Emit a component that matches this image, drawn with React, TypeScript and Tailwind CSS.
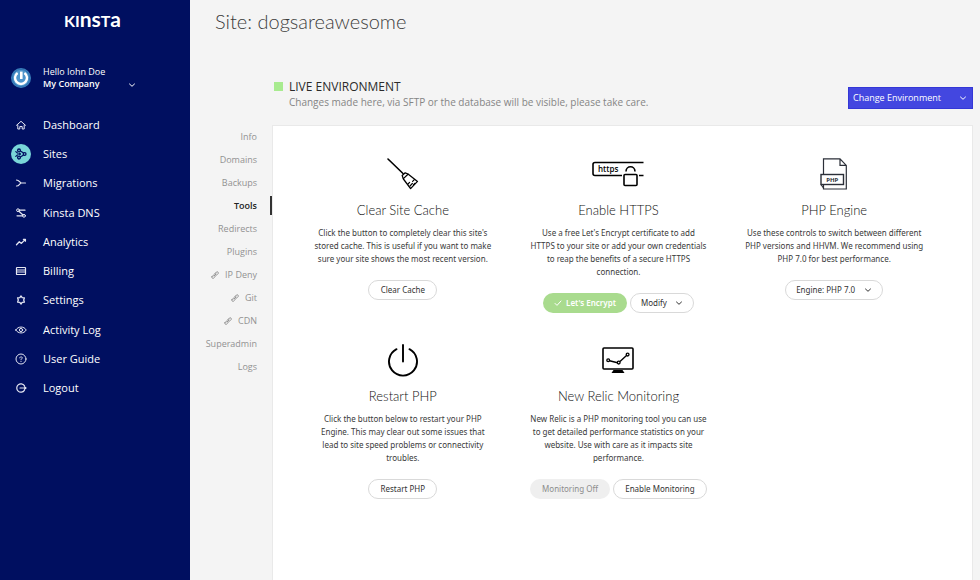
import type { ReactNode, SVGProps } from 'react'

type IconProps = SVGProps<SVGSVGElement>

function Svg({ size, children, ...rest }: IconProps & { size: number }) {
  return (
    <svg
      width={size}
      height={size}
      viewBox={`0 0 ${size} ${size}`}
      fill="none"
      stroke="currentColor"
      strokeLinecap="round"
      strokeLinejoin="round"
      aria-hidden="true"
      {...rest}
    >
      {children}
    </svg>
  )
}

const Chevron = ({ className }: { className?: string }) => (
  <Svg size={8} className={className}>
    <path d="M1.5 3 L4 5.3 L6.5 3" />
  </Svg>
)

const navItems: { label: string; icon: ReactNode; active?: boolean }[] = [
  {
    label: 'Dashboard',
    icon: <path d="M1.5 6.3 L6 2.3 L10.5 6.3 M2.8 6 V10 H4.8 V7.5 H7.2 V10 H9.2 V6" />,
  },
  {
    label: 'Sites',
    active: true,
    icon: (
      <>
        <circle cx="4" cy="2.4" r="1.4" strokeWidth="1.3" />
        <circle cx="4" cy="9.6" r="1.4" strokeWidth="1.3" />
        <circle cx="9.6" cy="6" r="1.4" strokeWidth="1.3" />
        <circle cx="4.6" cy="6" r="0.8" strokeWidth="1.1" />
        <path d="M0.8 3.6 L2.4 5 M0.8 8.4 L2.4 7 M5.8 3.2 L8.2 4.8 M5.8 8.8 L8.2 7.2" strokeWidth="1.2" />
      </>
    ),
  },
  {
    label: 'Migrations',
    icon: <path d="M1.5 3 C4.5 3 4.5 6 6.5 6 C4.5 6 4.5 9 1.5 9 M6.5 6 H10.5" strokeWidth="1.2" />,
  },
  {
    label: 'Kinsta DNS',
    icon: (
      <>
        <circle cx="3" cy="3.2" r="1.4" />
        <circle cx="9" cy="8.8" r="1.4" />
        <path d="M4.4 3.2 H10 M2 8.8 H7.6 M3.9 4.2 L8 8" strokeWidth="1.2" />
      </>
    ),
  },
  {
    label: 'Analytics',
    icon: <path d="M1.5 8.8 L4.3 5.8 L6.4 7.4 L10 3.6 M8.4 3.3 H10.4 V5.2" strokeWidth="1.3" />,
  },
  {
    label: 'Billing',
    icon: (
      <>
        <rect x="1.5" y="2.5" width="9" height="7" rx="0.6" strokeWidth="1.2" />
        <path d="M1.5 5 H10.5 M1.5 7 H10.5" />
      </>
    ),
  },
  {
    label: 'Settings',
    icon: (
      <path
        d="M6 2 L7.2 3.6 L9.4 3.9 L8.7 6 L9.4 8.1 L7.2 8.4 L6 10 L4.8 8.4 L2.6 8.1 L3.3 6 L2.6 3.9 L4.8 3.6 Z"
        strokeWidth="1.3"
      />
    ),
  },
  {
    label: 'Activity Log',
    icon: (
      <>
        <path d="M0.8 6 C3 2 9 2 11.2 6 C9 10 3 10 0.8 6 Z" />
        <circle cx="6" cy="6" r="1.6" />
      </>
    ),
  },
  {
    label: 'User Guide',
    icon: (
      <>
        <circle cx="6" cy="6" r="5" />
        <path d="M4.8 4.9 C4.8 3.3 7.2 3.4 7.2 4.9 C7.2 5.7 6 5.8 6 6.8 M6 8.4 V8.5" />
      </>
    ),
  },
  {
    label: 'Logout',
    icon: <path d="M9.4 3.6 A4.2 4.2 0 1 0 9.4 8.4 M5 6 H11 M9.4 4.6 L11 6 L9.4 7.4" strokeWidth="1.2" />,
  },
]

const tabs: { label: string; linked?: boolean; active?: boolean }[] = [
  { label: 'Info' },
  { label: 'Domains' },
  { label: 'Backups' },
  { label: 'Tools', active: true },
  { label: 'Redirects' },
  { label: 'Plugins' },
  { label: 'IP Deny', linked: true },
  { label: 'Git', linked: true },
  { label: 'CDN', linked: true },
  { label: 'Superadmin' },
  { label: 'Logs' },
]

function Sidebar() {
  return (
    <aside className="w-[190px] shrink-0 bg-[#000f60] text-white">
      <div
        aria-label="Kinsta"
        className="mt-[5px] flex h-7 items-baseline justify-center pr-[5px] font-['Lato'] text-[21px] leading-7 font-bold"
      >
        <span className="text-[16px]">KI</span>
        <span>ns</span>
        <span className="text-[16px]">T</span>
        <span>a</span>
      </div>

      <div className="mt-[33px] flex items-center pl-[11px]">
        <svg width="20" height="20" viewBox="0 0 20 20" fill="none" aria-hidden="true">
          <circle cx="10" cy="10" r="10" fill="#3b82bd" />
          <circle cx="10" cy="10" r="8.6" fill="#4e95cb" stroke="#2f6fae" strokeWidth="0.8" />
          <path d="M6.6 5 A6 6 0 1 0 13.4 5" stroke="#fff" strokeWidth="2.4" />
          <path d="M10.3 3.6 V11" stroke="#fff" strokeWidth="2.6" />
        </svg>
        <button type="button" className="ml-3 flex flex-1 items-end text-left text-[9px] leading-3">
          <span className="w-[85px]">
            <span className="block">Hello Iohn Doe</span>
            <span className="block font-semibold">My Company</span>
          </span>
          <Chevron className="mb-[1px]" />
        </button>
      </div>

      <nav className="mt-5">
        <ul className="flex h-[293px] flex-col">
          {navItems.map((item) => (
            <li key={item.label} className="flex flex-1 items-center">
              <a href="#" className="flex items-center pl-[11px] text-[11px] leading-4 font-medium">
                <span
                  className={
                    item.active
                      ? 'flex size-5 items-center justify-center rounded-full bg-[#79d6d8] text-[#000f60]'
                      : 'flex size-5 items-center justify-center text-[#e4e6f2]'
                  }
                >
                  <Svg size={12}>{item.icon}</Svg>
                </span>
                <span className="ml-3">{item.label}</span>
              </a>
            </li>
          ))}
        </ul>
      </nav>
    </aside>
  )
}

function Tabs() {
  return (
    <ul className="w-[82px] shrink-0 text-right text-[9px] leading-[23px] text-[#929292]">
      {tabs.map((tab) => (
        <li
          key={tab.label}
          className={
            tab.active
              ? 'flex h-[23px] items-center justify-end text-[#222]'
              : 'flex h-[23px] items-center justify-end pr-[15px]'
          }
        >
          <a
            href="#"
            className={
              tab.active
                ? 'flex h-[19px] items-center border-r-2 border-[#333] pr-[13px] font-semibold'
                : 'flex items-center'
            }
          >
            {tab.linked && (
              <Svg size={8} className="mr-[6px]" strokeWidth="0.9">
                <rect x="-1.9" y="-1.1" width="3.8" height="2.4" rx="1.2" transform="translate(2.4 5.6) rotate(-45)" />
                <rect x="-1.9" y="-1.1" width="3.8" height="2.4" rx="1.2" transform="translate(5.6 2.4) rotate(-45)" />
                <path d="M3 5 L5 3" />
              </Svg>
            )}
            {tab.label}
          </a>
        </li>
      ))}
    </ul>
  )
}

const pill = 'h-5 rounded-full border border-[#d9d9d9] bg-white text-[8px] text-[#333]'

function Card({ icon, title, text, children }: { icon: ReactNode; title: string; text: string; children: ReactNode }) {
  return (
    <section className="flex flex-col items-center text-center font-['Noto_Sans','Open_Sans',sans-serif]">
      <div className="flex h-[34px] items-center justify-center text-black">{icon}</div>
      <h2 className="mt-[7px] font-['Lato'] text-[13px] leading-6 font-light text-[#111]">{title}</h2>
      <p className="mt-1 w-[179px] text-[8px] leading-[13px] text-[#3a3a3a]">{text}</p>
      <div className="mt-[15px] flex gap-[3px]">{children}</div>
    </section>
  )
}

function PillSelect({ label, value, className }: { label: string; value: string; className: string }) {
  return (
    <span className="relative flex">
      <select aria-label={label} className={`appearance-none pl-[10px] ${pill} ${className}`}>
        <option>{value}</option>
      </select>
      <Chevron className="pointer-events-none absolute top-[6px] right-[11px] text-[#333]" />
    </span>
  )
}

const broom = (
  <svg width="32" height="32" viewBox="0 0 32 32" fill="none" stroke="currentColor" strokeLinejoin="round" strokeLinecap="round" aria-hidden="true">
    <path d="M1 1 L16 15.5" strokeWidth="1.6" />
    <path d="M15.2 17.6 L18.2 14.8 L21 16 L30.5 23.4 L23.6 30.6 L16.4 21 Z" strokeWidth="1.3" />
    <path d="M16.4 20.6 L21 16.2 M21 26 L22.6 24.4 M23 28 L25.4 25.4 M25.6 23.4 L27.4 21.6 M26.4 27 L27.8 25.4" strokeWidth="1.2" />
  </svg>
)

const https = (
  <svg width="52" height="26" viewBox="0 0 52 26" fill="none" stroke="currentColor" strokeWidth="1.6" aria-hidden="true">
    <path d="M51.5 1.5 H3 Q1 1.5 1 3.5 V12.5 Q1 14.5 3 14.5 H30 M47 14.5 H51.5" />
    <rect x="32" y="13.5" width="13" height="11" rx="1" />
    <path d="M34 10.6 C34 4.2 43 4.2 43 10.6" />
    <text x="6" y="10.5" fill="currentColor" stroke="none" fontSize="8" fontWeight="600" fontFamily="Open Sans, sans-serif">
      https
    </text>
  </svg>
)

const phpFile = (
  <svg width="28" height="32" viewBox="0 0 28 32" fill="none" stroke="#2b2f38" strokeWidth="1.2" aria-hidden="true">
    <path d="M3.5 16 V0.8 H20 L26.3 7.4 V31 H3.5 V27 M20 0.8 V7.4 H26.3" />
    <path d="M3.5 30 L1 26.5" />
    <rect x="1" y="16.5" width="22.5" height="10" fill="#fff" strokeWidth="1.4" />
    <text x="12.3" y="23.8" textAnchor="middle" fill="#2b2f38" stroke="none" fontSize="6" fontWeight="700" fontFamily="Open Sans, sans-serif">
      PHP
    </text>
  </svg>
)

const power = (
  <svg width="32" height="34" viewBox="0 0 32 34" fill="none" stroke="currentColor" strokeWidth="1.9" strokeLinecap="round" aria-hidden="true">
    <path d="M9.5 6.2 A14 14 0 1 0 22.5 6.2 M16 2 V18.5" />
  </svg>
)

const monitor = (
  <svg width="32" height="26" viewBox="0 0 32 26" fill="none" stroke="currentColor" strokeWidth="1.6" aria-hidden="true">
    <rect x="1" y="1" width="30" height="21" rx="1" />
    <path d="M11.5 23 H20.5 L22.5 26 H9.5 Z" fill="currentColor" stroke="none" />
    <path d="M7.5 13.7 L15.5 15.8 M18 14.6 L24.5 8.6" strokeWidth="1.4" />
    <circle cx="6.2" cy="13.2" r="1.4" strokeWidth="1.3" />
    <circle cx="16.7" cy="15.6" r="1.4" strokeWidth="1.3" />
    <circle cx="25.6" cy="7.6" r="1.4" strokeWidth="1.3" />
  </svg>
)

export default function App() {
  return (
    <div className="flex min-h-screen bg-[#f4f4f4] font-['Open_Sans','Noto_Sans',sans-serif]">
      <Sidebar />
      <main className="flex min-w-0 flex-1 flex-col">
        <h1 className="mt-[7px] pl-[25px] font-['Lato'] text-[20px] leading-7 font-light text-[#3c3c3c]">
          Site: dogsareawesome
        </h1>

        <header className="mt-11 flex items-start justify-between pr-[7px] pl-[84px]">
          <div className="flex">
            <span className="mt-[3px] size-[9px] bg-[#a8eb8f]" />
            <div className="ml-[6px]">
              <h2 className="text-[12px] leading-4 text-[#2b2b2b]">LIVE ENVIRONMENT</h2>
              <p className="text-[10px] leading-[14px] text-[#858585]">
                Changes made here, via SFTP or the database will be visible, please take care.
              </p>
            </div>
          </div>
          <span className="relative mt-2 flex">
            <select
              aria-label="Change environment"
              className="h-[22px] w-[125px] appearance-none border border-[#3437d6] bg-[#4347e0] pl-1 text-[9px] text-white"
            >
              <option>Change Environment</option>
            </select>
            <Chevron className="pointer-events-none absolute top-[7px] right-[6px] text-white" />
          </span>
        </header>

        <div className="mt-4 flex flex-1 pr-[7px]">
          <Tabs />
          <div className="grid flex-1 grid-cols-3 content-start gap-y-[30px] border border-b-0 border-[#e9e9e9] bg-white pt-[31px] pr-[30px] pb-8 pl-[22px]">
            <Card
              icon={broom}
              title="Clear Site Cache"
              text="Click the button to completely clear this site's stored cache. This is useful if you want to make sure your site shows the most recent version."
            >
              <button type="button" className={`w-[69px] ${pill}`}>
                Clear Cache
              </button>
            </Card>
            <Card
              icon={https}
              title="Enable HTTPS"
              text="Use a free Let's Encrypt certificate to add HTTPS to your site or add your own credentials to reap the benefits of a secure HTTPS connection."
            >
              <button
                type="button"
                className="flex h-5 w-[84px] items-center justify-center gap-1 rounded-full bg-[#a9db8e] text-[8px] font-semibold text-white"
              >
                <Svg size={8}>
                  <path d="M1 4.4 L3 6.4 L7 2" />
                </Svg>
                Let's Encrypt
              </button>
              <PillSelect label="Modify certificate" value="Modify" className="w-[64px]" />
            </Card>
            <Card
              icon={phpFile}
              title="PHP Engine"
              text="Use these controls to switch between different PHP versions and HHVM. We recommend using PHP 7.0 for best performance."
            >
              <PillSelect label="PHP engine" value="Engine: PHP 7.0" className="w-[98px]" />
            </Card>
            <Card
              icon={power}
              title="Restart PHP"
              text="Click the button below to restart your PHP Engine. This may clear out some issues that lead to site speed problems or connectivity troubles."
            >
              <button type="button" className={`w-[69px] ${pill}`}>
                Restart PHP
              </button>
            </Card>
            <Card
              icon={monitor}
              title="New Relic Monitoring"
              text="New Relic is a PHP monitoring tool you can use to get detailed performance statistics on your website. Use with care as it impacts site performance."
            >
              <button type="button" disabled className="h-5 w-[80px] rounded-full bg-[#efefef] text-[8px] text-[#8c8c8c]">
                Monitoring Off
              </button>
              <button type="button" className={`w-[94px] ${pill}`}>
                Enable Monitoring
              </button>
            </Card>
          </div>
        </div>
      </main>
    </div>
  )
}
